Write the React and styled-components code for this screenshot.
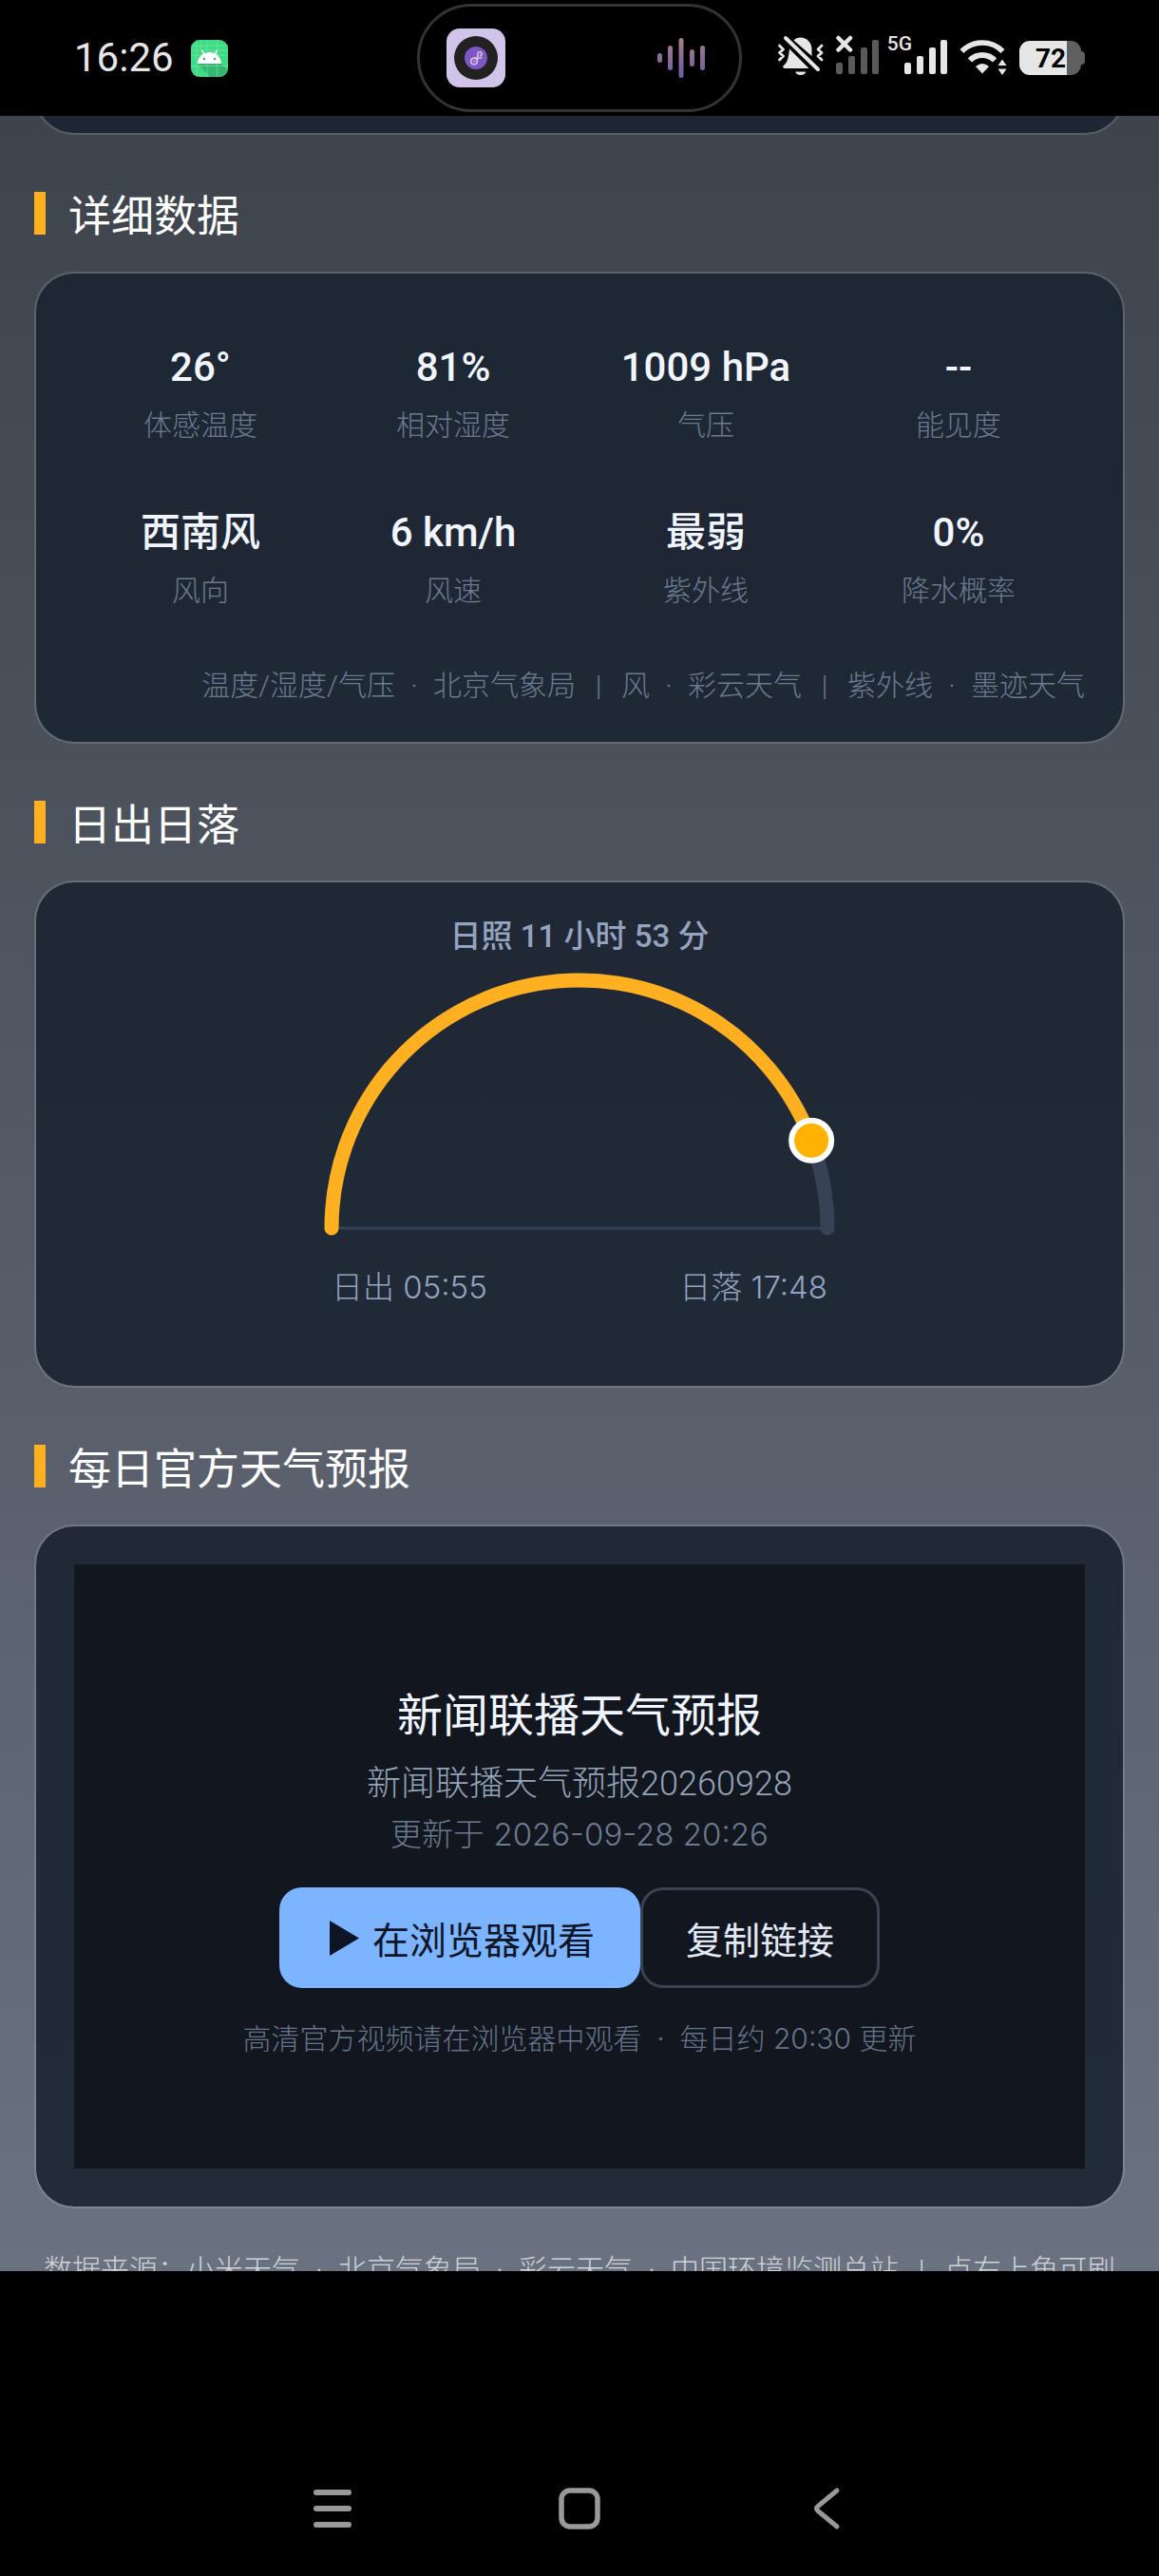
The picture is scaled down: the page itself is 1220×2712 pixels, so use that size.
import React from 'react';
import styled, { createGlobalStyle } from 'styled-components';

const GlobalStyle = createGlobalStyle`
  * {
    box-sizing: border-box;
  }
  body {
    margin: 0;
    background: #000;
    font-family: Roboto, 'Noto Sans CJK SC', sans-serif;
  }
`;

const Screen = styled.div`
  display: flex;
  flex-direction: column;
  height: 100vh;
  background: #000;
  overflow: hidden;
`;

/* ---------- status bar ---------- */

const StatusBar = styled.header`
  display: grid;
  grid-template-columns: 1fr 342px 1fr;
  align-items: center;
  flex: none;
  height: 122px;
  padding: 0 78px;
  color: #e6e6e6;
`;

const StatusLeft = styled.div`
  display: flex;
  align-items: center;
  gap: 18px;
`;

const Clock = styled.time`
  font-size: 42px;
  line-height: 48px;
`;

const Island = styled.div`
  display: flex;
  align-items: center;
  justify-content: space-between;
  height: 114px;
  padding: 0 35px 0 28px;
  border: 3px solid #333;
  border-radius: 57px;
`;

const StatusRight = styled.div`
  display: flex;
  align-items: flex-end;
  justify-content: flex-end;
  gap: 12px;
  padding-bottom: 6px;
`;

const NetworkLabel = styled.span`
  align-self: flex-start;
  margin: 0 -20px 0 -4px;
  font-size: 21px;
  font-weight: 500;
  line-height: 18px;
`;

const Battery = styled.div`
  display: flex;
  align-items: center;
  height: 36px;
  &::after {
    content: '';
    width: 4px;
    height: 14px;
    background: #606060;
    border-radius: 0 4px 4px 0;
  }
`;

const BatteryBody = styled.div`
  width: 65px;
  height: 36px;
  padding-left: 17px;
  border-radius: 11px;
  background: linear-gradient(90deg, #e6e6e6 50px, #606060 50px);
  color: #000;
  font-size: 28px;
  font-weight: 700;
  line-height: 37px;
`;

/* ---------- page ---------- */

const Main = styled.main`
  flex: 1;
  min-height: 0;
  padding: 0 36px;
  background: linear-gradient(#3e444c, #6a7180);
  overflow: hidden;
`;

const Card = styled.div`
  padding: 40px;
  border: 2px solid rgba(255, 255, 255, 0.14);
  border-radius: 42px;
  background: rgba(27, 36, 49, 0.9);
  background-clip: padding-box;
`;

/* bottom edge of the card that is scrolled under the status bar */
const ScrolledCard = styled(Card)`
  height: 120px;
  margin-top: -100px;
`;

const SectionTitle = styled.h2`
  display: flex;
  align-items: center;
  gap: 24px;
  margin: 60px 0 39px;
  color: #fff;
  font-family: 'Noto Sans CJK SC', sans-serif;
  font-size: 45px;
  font-weight: 400;
  line-height: 45px;
  &::before {
    content: '';
    width: 12px;
    height: 45px;
    background: #ffb020;
  }
`;

const DataGrid = styled.dl`
  display: grid;
  grid-template-columns: repeat(4, 1fr);
  row-gap: 56px;
  margin: 0;
  padding-top: 26px;
`;

const DataItem = styled.div`
  display: flex;
  flex-direction: column-reverse;
  gap: 4px;
  text-align: center;
`;

const Value = styled.dd`
  margin: 0;
  color: #f1f5ff;
  font-size: 42px;
  font-weight: 500;
  line-height: 66px;
`;

const Label = styled.dt`
  color: #6b7a90;
  font-size: 30px;
  font-weight: 300;
  line-height: 48px;
`;

const Source = styled.p`
  margin: 56px 0 0;
  color: #6b7a90;
  font-size: 30px;
  font-weight: 300;
  line-height: 39px;
  text-align: right;
  white-space: nowrap;
`;

const Separator = styled.span`
  display: inline-block;
  width: ${({ $wide }) => ($wide ? '48px' : '40px')};
  text-align: center;
`;

const SunCard = styled(Card)`
  display: flex;
  flex-direction: column;
  align-items: center;
  padding: 33px 40px 80px;
`;

const Daylight = styled.p`
  margin: 0;
  color: #94a3c0;
  font-size: 33px;
  font-weight: 500;
  line-height: 48px;
`;

const SunArc = styled.svg`
  display: block;
  width: 540px;
  height: 294px;
  margin-top: 8px;
`;

const SunTimes = styled.div`
  display: flex;
  justify-content: space-between;
  width: 522px;
  margin-top: 19px;
  color: #94a3c0;
  font-family: Inter, 'Noto Sans CJK SC', sans-serif;
  font-size: 33px;
  font-weight: 300;
  line-height: 48px;
`;

const VideoPanel = styled.div`
  display: flex;
  flex-direction: column;
  align-items: center;
  height: 636px;
  padding-top: 119px;
  background: #12161e;
`;

const VideoTitle = styled.h3`
  margin: 0;
  color: #f1f5ff;
  font-family: 'Noto Sans CJK SC', sans-serif;
  font-size: 48px;
  font-weight: 400;
  line-height: 72px;
`;

const VideoName = styled.p`
  margin: 13px 0 0;
  color: #94a3b8;
  font-size: 36px;
  font-weight: 300;
  line-height: 54px;
`;

const VideoTime = styled.p`
  margin: 0;
  color: #6b7a90;
  font-family: Inter, 'Noto Sans CJK SC', sans-serif;
  font-size: 33px;
  font-weight: 300;
  line-height: 52px;
`;

const Actions = styled.div`
  display: flex;
  margin-top: 30px;
`;

const Button = styled.button`
  display: flex;
  align-items: center;
  gap: 14px;
  height: 106px;
  padding: ${({ $primary }) => ($primary ? '0 48px 0 53px' : '0 45px')};
  border: ${({ $primary }) => ($primary ? 'none' : '3px solid #3a4352')};
  border-radius: 24px;
  background: ${({ $primary }) => ($primary ? '#7cb4ff' : 'transparent')};
  color: ${({ $primary }) => ($primary ? '#0b1526' : '#e2e8f5')};
  font-family: 'Noto Sans CJK SC', sans-serif;
  font-size: 39px;
  font-weight: 400;
  line-height: 60px;
  cursor: pointer;
`;

const VideoNote = styled.p`
  margin: 29px 0 0;
  color: #64748b;
  font-family: Inter, 'Noto Sans CJK SC', sans-serif;
  font-size: 30px;
  font-weight: 300;
  line-height: 48px;
  white-space: nowrap;
`;

const Footer = styled.footer`
  margin-top: 41px;
  color: rgba(255, 255, 255, 0.7);
  font-size: 30px;
  font-weight: 300;
  line-height: 48px;
  text-align: center;
  white-space: nowrap;
`;

/* ---------- system navigation ---------- */

const NavBar = styled.nav`
  display: flex;
  align-items: flex-end;
  justify-content: center;
  gap: 212px;
  flex: none;
  height: 321px;
  padding-bottom: 47px;
`;

const NavButton = styled.button`
  display: flex;
  padding: 0;
  border: none;
  background: none;
  color: #999;
  cursor: pointer;
`;

const data = [
  { label: '体感温度', value: '26°' },
  { label: '相对湿度', value: '81%' },
  { label: '气压', value: '1009 hPa' },
  { label: '能见度', value: '--' },
  { label: '风向', value: '西南风' },
  { label: '风速', value: '6 km/h' },
  { label: '紫外线', value: '最弱' },
  { label: '降水概率', value: '0%' },
];

const Dot = () => <Separator> · </Separator>;
const Pipe = () => <Separator $wide> | </Separator>;

const AndroidIcon = () => (
  <svg width="39" height="39" viewBox="0 0 39 39">
    <rect width="39" height="39" rx="9" fill="#3ddc84" />
    <path d="M7 25 L32 25 L39 32 V30 a9 9 0 0 1 -9 9 H20 Z" fill="#34b871" />
    <path
      d="M6 0V39M11 0V12M17 0V12M27.500 0V39M0 6H39M0 11H39M0 16H39M0 27.500H39M17 25V39"
      stroke="#8aeeb6"
      strokeWidth="1"
      opacity=".5"
    />
    <path d="M7 25a12.500 12 0 0 1 25 0Z" fill="#fff" />
    <path d="M11.500 11l3 5M27.500 11l-3 5" stroke="#fff" strokeWidth="1.500" />
    <circle cx="14" cy="20" r="1.200" fill="#2fae68" />
    <circle cx="25" cy="20" r="1.200" fill="#2fae68" />
  </svg>
);

const MusicIcon = () => (
  <svg width="62" height="62" viewBox="0 0 62 62">
    <rect width="62" height="62" rx="14" fill="#d1c4e9" />
    <circle cx="31" cy="31" r="23" fill="#212121" />
    <circle cx="31" cy="31" r="12" fill="#7e57c2" />
    <g fill="none" stroke="#d1c4e9" strokeWidth="1.600">
      <circle cx="29" cy="34.500" r="3.300" />
      <path d="M32.300 35.500L33 26.500a2 2 0 1 1 2 2.300M28.500 31h9" />
    </g>
    <circle cx="29" cy="34.500" r="1" fill="#d1c4e9" />
  </svg>
);

const WaveIcon = () => (
  <svg width="51" height="42" viewBox="0 0 51 42">
    <defs>
      <linearGradient id="wave" x1="0" y1="0" x2="0" y2="42" gradientUnits="userSpaceOnUse">
        <stop offset="0" stopColor="#a37f86" />
        <stop offset="1" stopColor="#6c5aa6" />
      </linearGradient>
    </defs>
    <g fill="url(#wave)">
      <rect x="0" y="16" width="5" height="10" rx="2.500" />
      <rect x="11" y="8" width="5" height="26" rx="2.500" />
      <rect x="22.500" y="0" width="5" height="42" rx="2.500" />
      <rect x="34" y="12" width="5" height="18" rx="2.500" />
      <rect x="45" y="8" width="5" height="26" rx="2.500" />
    </g>
  </svg>
);

const MutedBellIcon = () => (
  <svg width="50" height="42" viewBox="0 0 50 42">
    <g fill="#e6e6e6">
      <path d="M17.500 5.500C19 3.500 21.500 2.500 24.500 2.500c7 0 12 5.500 12 12.500V22Z" />
      <path d="M13 14.500L33 34.500V35H8c-2 0-2.500-2-1-3.200C12 28 12 21 13 14.500Z" />
      <path d="M19 38.500h11.500c-1 2.500-3 3.500-5.700 3.500S20 41 19 38.500Z" />
    </g>
    <g fill="none" stroke="#e6e6e6" strokeLinecap="round" strokeLinejoin="round">
      <path d="M9 3L43 36" strokeWidth="4" />
      <path d="M2.500 11l4 4-4 3.500 4 3.500-4 4M47 11l-4 4 4 3.500-4 3.500 4 4" strokeWidth="2.800" />
    </g>
  </svg>
);

const SignalBars = ({ color, off }) => (
  <svg width="46" height="42" viewBox="0 0 46 42">
    <g fill={color}>
      <rect x="0" y="29" width="7" height="12" rx="2" />
      <rect x="13" y="22" width="7" height="19" rx="2" />
      <rect x="26" y="13" width="7" height="28" rx="2" />
      <rect x="38" y="5" width="7" height="36" rx="2" />
    </g>
    {off && <path d="M2.500 3L15 15.500M15 3L2.500 15.500" stroke="#e6e6e6" strokeWidth="4.500" strokeLinecap="round" />}
  </svg>
);

const WifiIcon = () => (
  <svg width="51" height="37" viewBox="0 0 51 37">
    <g fill="none" stroke="#e6e6e6">
      <path d="M2.500 12a30 30 0 0 1 43 0" strokeWidth="5.500" />
      <path d="M11 21.500a18 18 0 0 1 26 0" strokeWidth="6" />
    </g>
    <path d="M17 28q7-6 14 0l-7 7.500Z" fill="#e6e6e6" />
    <path d="M45 20.500l4.500 6.500h-9ZM45 37l4.500-6.500h-9Z" fill="#e6e6e6" />
  </svg>
);

// share of daylight already passed decides where the sun sits on the arc
const SUN_ANGLE = 20.7;
const RADIUS = 261;

const SunPath = () => {
  const rad = (SUN_ANGLE * Math.PI) / 180;
  const x = 270 + RADIUS * Math.cos(rad);
  const y = 275 - RADIUS * Math.sin(rad);
  return (
    <SunArc viewBox="0 0 540 294" role="img" aria-label="日照进度">
      <path d="M9 275H531" stroke="#334155" strokeWidth="3" />
      <g fill="none" strokeWidth="15" strokeLinecap="round">
        <path d="M9 275A261 261 0 0 1 531 275" stroke="#374355" />
        <path d={`M9 275A261 261 0 0 1 ${x} ${y}`} stroke="#ffb020" />
      </g>
      <circle cx={x} cy={y} r="21" fill="#ffb300" stroke="#fff" strokeWidth="6" />
    </SunArc>
  );
};

const App = () => {
  return (
    <Screen>
      <GlobalStyle />
      <StatusBar>
        <StatusLeft>
          <Clock>16:26</Clock>
          <AndroidIcon />
        </StatusLeft>
        <Island>
          <MusicIcon />
          <WaveIcon />
        </Island>
        <StatusRight>
          <MutedBellIcon />
          <SignalBars color="#5a5a5a" off />
          <NetworkLabel>5G</NetworkLabel>
          <SignalBars color="#e6e6e6" />
          <WifiIcon />
          <Battery>
            <BatteryBody>72</BatteryBody>
          </Battery>
        </StatusRight>
      </StatusBar>

      <Main>
        <ScrolledCard />

        <SectionTitle>详细数据</SectionTitle>
        <Card>
          <DataGrid>
            {data.map((item) => (
              <DataItem key={item.label}>
                <Label>{item.label}</Label>
                <Value>{item.value}</Value>
              </DataItem>
            ))}
          </DataGrid>
          <Source>
            温度/湿度/气压<Dot />北京气象局<Pipe />风<Dot />彩云天气<Pipe />紫外线<Dot />墨迹天气
          </Source>
        </Card>

        <SectionTitle>日出日落</SectionTitle>
        <SunCard>
          <Daylight>日照 11 小时 53 分</Daylight>
          <SunPath />
          <SunTimes>
            <span>日出 05:55</span>
            <span>日落 17:48</span>
          </SunTimes>
        </SunCard>

        <SectionTitle>每日官方天气预报</SectionTitle>
        <Card>
          <VideoPanel>
            <VideoTitle>新闻联播天气预报</VideoTitle>
            <VideoName>新闻联播天气预报20260928</VideoName>
            <VideoTime>更新于 2026-09-28 20:26</VideoTime>
            <Actions>
              <Button type="button" $primary>
                <svg width="31" height="37" viewBox="0 0 31 37">
                  <path d="M0 0L31 18.500L0 37Z" fill="currentColor" />
                </svg>
                在浏览器观看
              </Button>
              <Button type="button">复制链接</Button>
            </Actions>
            <VideoNote>
              高清官方视频请在浏览器中观看<Dot />每日约 20:30 更新
            </VideoNote>
          </VideoPanel>
        </Card>

        <Footer>
          数据来源：小米天气<Dot />北京气象局<Dot />彩云天气<Dot />中国环境监测总站<Pipe />点右上角可刷
        </Footer>
      </Main>

      <NavBar>
        <NavButton type="button" aria-label="最近任务">
          <svg width="48" height="48" viewBox="0 0 48 48">
            <path d="M7 7H41M7 24H41M7 41H41" stroke="currentColor" strokeWidth="6" strokeLinecap="round" />
          </svg>
        </NavButton>
        <NavButton type="button" aria-label="主屏幕">
          <svg width="48" height="48" viewBox="0 0 48 48">
            <rect x="5" y="5" width="38" height="38" rx="9" fill="none" stroke="currentColor" strokeWidth="5.500" />
          </svg>
        </NavButton>
        <NavButton type="button" aria-label="返回">
          <svg width="48" height="48" viewBox="0 0 48 48">
            <path
              d="M35 5L15 21.500Q12 24 15 26.500L35 43"
              fill="none"
              stroke="currentColor"
              strokeWidth="5"
              strokeLinecap="round"
            />
          </svg>
        </NavButton>
      </NavBar>
    </Screen>
  );
};

export default App;
